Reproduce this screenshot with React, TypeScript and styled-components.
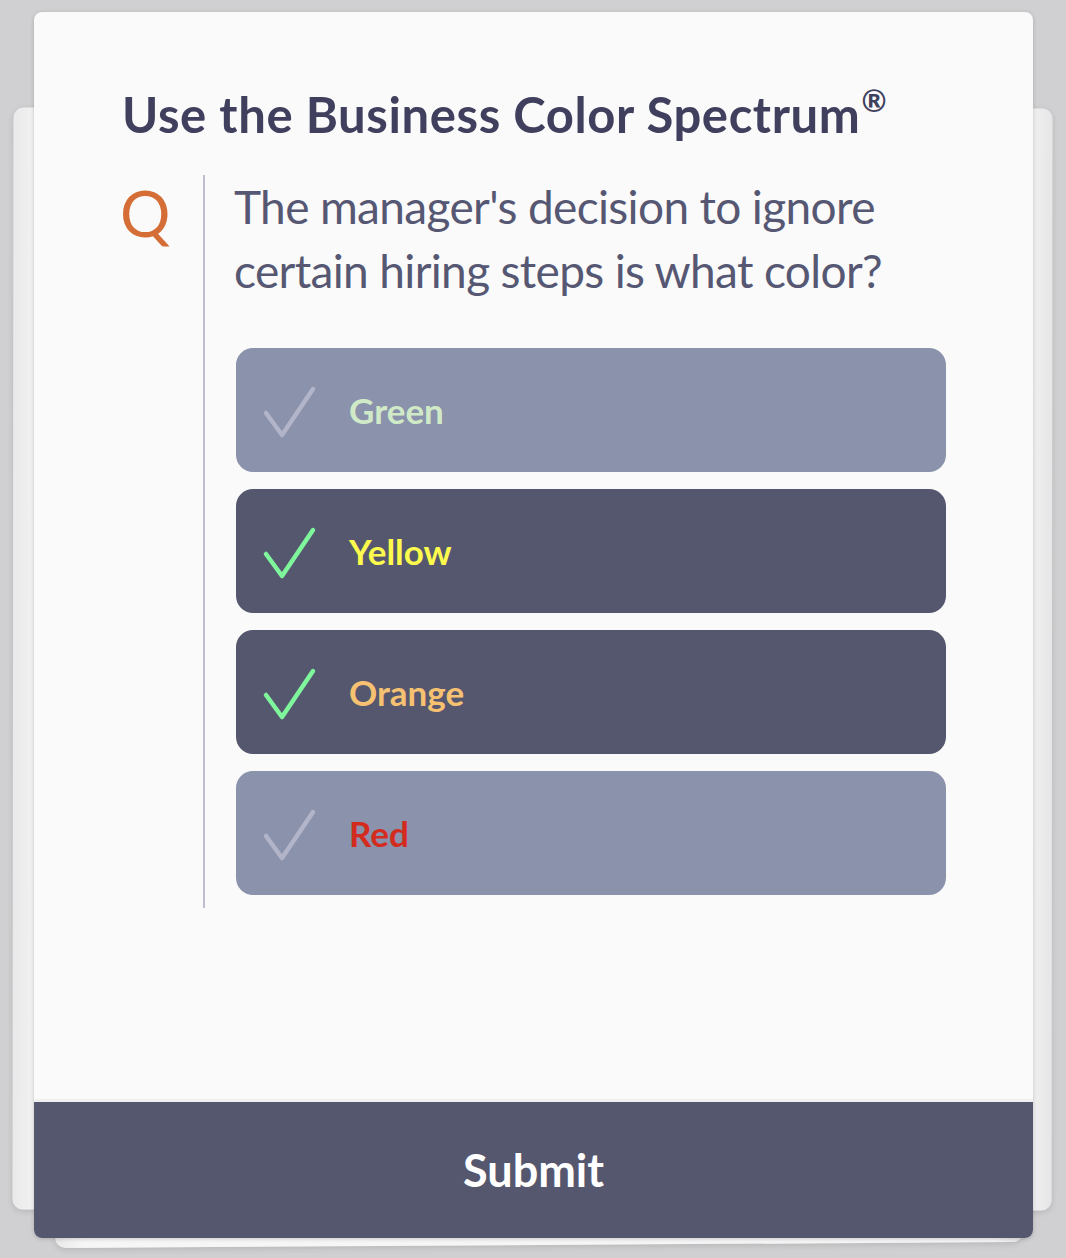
import React from "react";
import styled, { createGlobalStyle } from "styled-components";

const Global = createGlobalStyle`
  html, body { margin: 0; padding: 0; background: #d0d0d2; }
  body { font-family: Lato, "Noto Sans", sans-serif; }
  * { box-sizing: border-box; }
`;

const Stage = styled.div`
  position: relative;
  width: 1066px;
  height: 1258px;
  padding: 12px 33px 20px 34px;
  overflow: hidden;
`;

const BackPage = styled.div<{ $variant: "mid" | "low" }>`
  position: absolute;
  border-radius: 10px;
  background: linear-gradient(to right, #e9e9ea 0%, #f6f6f6 3%, #f6f6f6 97%, #e6e6e7 100%);
  box-shadow: 0 2px 6px rgba(0, 0, 0, 0.12);
  ${(p) =>
    p.$variant === "mid"
      ? `left: 13px; top: 108px; width: 1039px; height: 1102px; transform: rotate(0.05deg);`
      : `left: 52px; top: 200px; width: 968px; height: 1045px; transform: rotate(-0.35deg);`}
`;

const Card = styled.div`
  position: relative;
  width: 999px;
  height: 1226px;
  background: #fafafa;
  border-radius: 8px;
  box-shadow: 0 1px 4px rgba(0, 0, 0, 0.18);
  display: flex;
  flex-direction: column;
  overflow: hidden;
`;

const Body = styled.div`
  flex: 1;
  padding: 73px 0 0 88px;
  display: flex;
  flex-direction: column;
`;

const Title = styled.h1`
  margin: 0;
  font-family: Lato, "Noto Sans", sans-serif;
  font-weight: 700;
  font-size: 49px;
  line-height: 58px;
  color: #40405e;
  letter-spacing: 0.6px;
`;

const Reg = styled.sup`
  font-size: 0.62em;
  vertical-align: 0.7em;
  line-height: 0;
  letter-spacing: 0;
  margin-left: 1px;
`;

const QuestionRow = styled.div`
  margin-top: 32px;
  display: flex;
`;

const QMark = styled.div`
  width: 83px;
  margin-left: -2px;
  font-family: Lato, "Noto Sans", sans-serif;
  font-weight: 400;
  font-size: 63px;
  line-height: 76px;
  color: #d46e36;
`;

const QBody = styled.div`
  border-left: 2px solid #bdbdcc;
  padding: 0 0 13px 29px;
  display: flex;
  flex-direction: column;
`;

const QText = styled.p`
  margin: 0;
  width: 680px;
  font-family: Lato, "Noto Sans", sans-serif;
  font-weight: 400;
  font-size: 46px;
  line-height: 64px;
  letter-spacing: -0.65px;
  color: #565873;
`;

const Options = styled.div`
  margin: 45px 0 0 2px;
  display: flex;
  flex-direction: column;
  gap: 17px;
`;

const Option = styled.div<{ $selected: boolean }>`
  width: 710px;
  height: 124px;
  border-radius: 17px;
  background: ${(p) => (p.$selected ? "#55576f" : "#8b92ab")};
  display: flex;
  align-items: center;
  padding-left: 26px;
  gap: 31px;
`;

const CheckSvg = styled.svg`
  width: 56px;
  height: 56px;
  flex: none;
  margin-top: 5px;
`;

const Label = styled.span<{ $color: string }>`
  font-family: Lato, "Noto Sans", sans-serif;
  font-weight: 700;
  font-size: 35px;
  line-height: 42px;
  color: ${(p) => p.$color};
`;

const Divider = styled.div`
  height: 3px;
  background: #efefef;
`;

const Submit = styled.button`
  height: 136px;
  border: none;
  background: #55576f;
  color: #ffffff;
  font-family: Lato, "Noto Sans", sans-serif;
  font-weight: 700;
  font-size: 45px;
  display: flex;
  align-items: center;
  justify-content: center;
  padding: 0;
  cursor: pointer;
`;

const Check: React.FC<{ color: string }> = ({ color }) => (
  <CheckSvg viewBox="0 0 56 56">
    <polyline
      points="4,28 20,50 51,4"
      fill="none"
      stroke={color}
      strokeWidth="4.5"
      strokeLinecap="round"
      strokeLinejoin="round"
    />
  </CheckSvg>
);

const options = [
  { label: "Green", color: "#d0eac8", selected: false },
  { label: "Yellow", color: "#fcfb4d", selected: true },
  { label: "Orange", color: "#f6c171", selected: true },
  { label: "Red", color: "#d42b1f", selected: false },
];

export default function App() {
  return (
    <>
      <Global />
      <Stage>
        <BackPage $variant="low" />
        <BackPage $variant="mid" />
        <Card>
          <Body>
            <Title>
              Use the Business Color Spectrum<Reg>®</Reg>
            </Title>
            <QuestionRow>
              <QMark>Q</QMark>
              <QBody>
                <QText>The manager's decision to ignore certain hiring steps is what color?</QText>
                <Options>
                  {options.map((o) => (
                    <Option key={o.label} $selected={o.selected}>
                      <Check color={o.selected ? "#7ff59c" : "#b2b5ca"} />
                      <Label $color={o.color}>{o.label}</Label>
                    </Option>
                  ))}
                </Options>
              </QBody>
            </QuestionRow>
          </Body>
          <Divider />
          <Submit>Submit</Submit>
        </Card>
      </Stage>
    </>
  );
}
